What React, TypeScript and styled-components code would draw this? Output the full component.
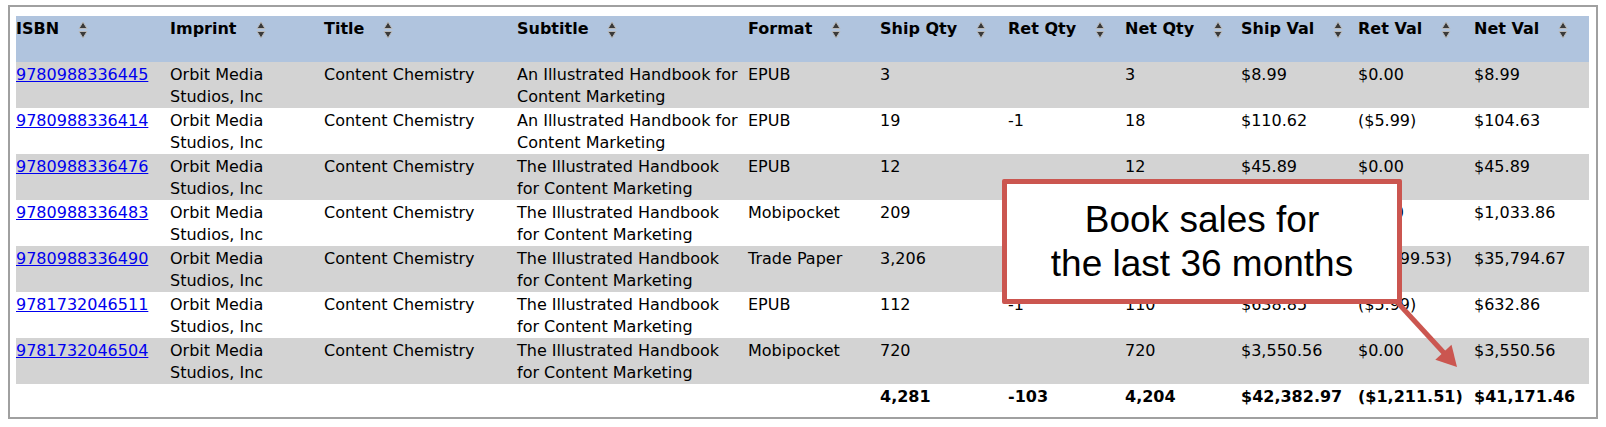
import React from 'react'
import styled, { createGlobalStyle } from 'styled-components'

const GlobalStyle = createGlobalStyle`
  body {
    margin: 0;
    background: #fff;
    font-family: "DejaVu Sans", Verdana, sans-serif;
  }
`

const Frame = styled.div`
  position: relative;
  margin: 5px 8px 0;
  border: 2px solid #a0a0a0;
  padding: 9px 7px 8px 6px;
`

const Table = styled.table`
  width: 1573px;
  table-layout: fixed;
  border-collapse: collapse;
  font-size: 16px;
  line-height: 22px;
  color: #000;
`

const Col = styled.col<{ $w: number }>`
  width: ${(p) => p.$w}px;
`

const HeadRow = styled.tr`
  height: 46px;
  background: #b0c4de;
`

const Th = styled.th`
  padding: 2px 3px 0 0;
  vertical-align: top;
  text-align: left;
  font-weight: bold;
`

const HeadInner = styled.div`
  display: flex;
  align-items: flex-start;
  white-space: nowrap;
`

const SortIcon = styled.svg`
  flex: none;
  margin: 3px 0 0 19px;
`

const Row = styled.tr`
  height: 46px;
  &:nth-child(odd) {
    background: #d3d3d3;
  }
`

const Td = styled.td`
  padding: 2px 3px 0 0;
  vertical-align: top;
  text-align: left;
`

const IsbnLink = styled.a`
  color: #0000ee;
  text-decoration: underline;
`

const TotalRow = styled.tr`
  height: 25px;
  font-weight: bold;
`

const Callout = styled.div`
  position: absolute;
  left: 992px;
  top: 172px;
  width: 400px;
  box-sizing: border-box;
  padding: 14px 0 13px;
  border: 5px solid #cb5650;
  border-radius: 2px;
  background: #fff;
  font-family: "Liberation Sans", Arial, sans-serif;
  font-size: 37px;
  line-height: 44px;
  text-align: center;
  color: #000;
`

const Arrow = styled.svg`
  position: absolute;
  left: 1370px;
  top: 288px;
  overflow: visible;
`

const columns = [
  { label: 'ISBN', w: 154 },
  { label: 'Imprint', w: 154 },
  { label: 'Title', w: 193 },
  { label: 'Subtitle', w: 231 },
  { label: 'Format', w: 132 },
  { label: 'Ship Qty', w: 128 },
  { label: 'Ret Qty', w: 117 },
  { label: 'Net Qty', w: 116 },
  { label: 'Ship Val', w: 117 },
  { label: 'Ret Val', w: 116 },
  { label: 'Net Val', w: 115 },
]

type Sale = {
  isbn: string
  subtitle: string
  format: string
  ship: string
  ret: string
  net: string
  shipVal: string
  retVal: string
  netVal: string
}

const AN = 'An Illustrated Handbook for Content Marketing'
const THE = 'The Illustrated Handbook for Content Marketing'

const sales: Sale[] = [
  { isbn: '9780988336445', subtitle: AN, format: 'EPUB', ship: '3', ret: '', net: '3', shipVal: '$8.99', retVal: '$0.00', netVal: '$8.99' },
  { isbn: '9780988336414', subtitle: AN, format: 'EPUB', ship: '19', ret: '-1', net: '18', shipVal: '$110.62', retVal: '($5.99)', netVal: '$104.63' },
  { isbn: '9780988336476', subtitle: THE, format: 'EPUB', ship: '12', ret: '', net: '12', shipVal: '$45.89', retVal: '$0.00', netVal: '$45.89' },
  { isbn: '9780988336483', subtitle: THE, format: 'Mobipocket', ship: '209', ret: '', net: '209', shipVal: '$1,033.86', retVal: '$0.00', netVal: '$1,033.86' },
  { isbn: '9780988336490', subtitle: THE, format: 'Trade Paper', ship: '3,206', ret: '-101', net: '3,105', shipVal: '$36,994.20', retVal: '($1,199.53)', netVal: '$35,794.67' },
  { isbn: '9781732046511', subtitle: THE, format: 'EPUB', ship: '112', ret: '-1', net: '110', shipVal: '$638.85', retVal: '($5.99)', netVal: '$632.86' },
  { isbn: '9781732046504', subtitle: THE, format: 'Mobipocket', ship: '720', ret: '', net: '720', shipVal: '$3,550.56', retVal: '$0.00', netVal: '$3,550.56' },
]

function Sort() {
  return (
    <SortIcon width="10" height="18" viewBox="0 0 10 18">
      <polygon points="5,1 9,7.5 1,7.5" fill="#3a3a3a" stroke="#b8b8b8" strokeWidth="1" />
      <polygon points="1,10.5 9,10.5 5,17" fill="#3a3a3a" stroke="#b8b8b8" strokeWidth="1" />
    </SortIcon>
  )
}

export default function App() {
  return (
    <>
      <GlobalStyle />
      <Frame>
        <Table>
          <colgroup>
            {columns.map((c) => (
              <Col key={c.label} $w={c.w} />
            ))}
          </colgroup>
          <thead>
            <HeadRow>
              {columns.map((c) => (
                <Th key={c.label}>
                  <HeadInner>
                    {c.label}
                    <Sort />
                  </HeadInner>
                </Th>
              ))}
            </HeadRow>
          </thead>
          <tbody>
            {sales.map((s) => (
              <Row key={s.isbn}>
                <Td>
                  <IsbnLink href="#">{s.isbn}</IsbnLink>
                </Td>
                <Td>Orbit Media Studios, Inc</Td>
                <Td>Content Chemistry</Td>
                <Td>{s.subtitle}</Td>
                <Td>{s.format}</Td>
                <Td>{s.ship}</Td>
                <Td>{s.ret}</Td>
                <Td>{s.net}</Td>
                <Td>{s.shipVal}</Td>
                <Td>{s.retVal}</Td>
                <Td>{s.netVal}</Td>
              </Row>
            ))}
          </tbody>
          <tfoot>
            <TotalRow>
              <Td />
              <Td />
              <Td />
              <Td />
              <Td />
              <Td>4,281</Td>
              <Td>-103</Td>
              <Td>4,204</Td>
              <Td>$42,382.97</Td>
              <Td>($1,211.51)</Td>
              <Td>$41,171.46</Td>
            </TotalRow>
          </tfoot>
        </Table>

        <Callout>
          Book sales for
          <br />
          the last 36 months
        </Callout>
        <Arrow width="90" height="85" viewBox="0 0 90 85">
          <line x1="18" y1="8" x2="64" y2="58" stroke="#cb5650" strokeWidth="5" />
          <polygon points="77,72 71.5,49.8 55.3,64.8" fill="#cb5650" />
        </Arrow>
      </Frame>
    </>
  )
}
